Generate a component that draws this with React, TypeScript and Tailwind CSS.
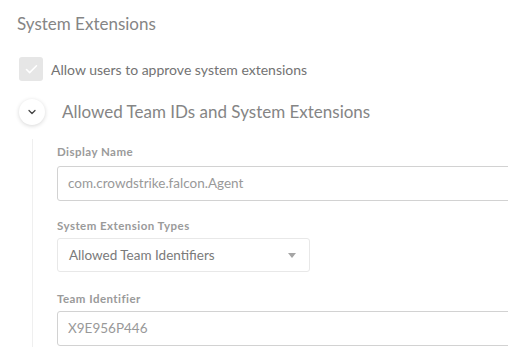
import { ChevronDown, Check } from "lucide-react";

const font = { fontFamily: "Lato, 'Open Sans', sans-serif" };

export default function App() {
  return (
    <div className="w-[508px] h-[364px] overflow-hidden bg-white" style={font}>
      <div className="pl-[17px] pt-[13px]">
        <h1 className="text-[17px] leading-[22px] text-[#858585]">System Extensions</h1>

        {/* Checkbox row */}
        <div className="flex items-center gap-[8px] mt-[22px] ml-[2px]">
          <div className="w-[24px] h-[24px] rounded-[3px] bg-[#e6e6e6] flex items-center justify-center">
            <Check size={15} strokeWidth={2.5} className="text-white" />
          </div>
          <span className="text-[14px] text-[#737373]">Allow users to approve system extensions</span>
        </div>

        {/* Section header */}
        <div className="flex items-center mt-[18px] ml-[2px]">
          <div className="w-[26px] h-[26px] rounded-full bg-white shadow-[0_1px_4px_rgba(0,0,0,0.16)] flex items-center justify-center">
            <ChevronDown size={12} strokeWidth={2.5} className="text-[#444]" />
          </div>
          <span className="ml-[17px] text-[17px] text-[#858585]">
            Allowed Team IDs and System Extensions
          </span>
        </div>

        {/* Nested fields */}
        <div className="mt-[14px] ml-[15px] border-l border-[#efefef] pl-[24px] h-[208px]">
          <div className="pt-[6px]">
            <label className="block text-[11.5px] tracking-[0.04em] font-bold text-[#9a9a9a] leading-[14px]">Display Name</label>
            <div className="mt-[7px] h-[35px] w-[480px] border border-[#d2d2d2] rounded-[3px] flex items-center px-[10px] text-[13.5px] text-[#999]">
              com.crowdstrike.falcon.Agent
            </div>
          </div>

          <div className="mt-[18px]">
            <label className="block text-[11.5px] tracking-[0.04em] font-bold text-[#9a9a9a] leading-[14px]">System Extension Types</label>
            <div className="mt-[5px] h-[34px] w-[253px] border border-[#e8e8e8] rounded-[3px] flex items-center justify-between pl-[11px] pr-[13px] text-[13.5px] text-[#7a7a7a]">
              <span>Allowed Team Identifiers</span>
              <span className="w-0 h-0 border-l-[4px] border-r-[4px] border-t-[5px] border-l-transparent border-r-transparent border-t-[#a5a5a5]" />
            </div>
          </div>

          <div className="mt-[20px]">
            <label className="block text-[11.5px] tracking-[0.04em] font-bold text-[#9a9a9a] leading-[14px]">Team Identifier</label>
            <div className="mt-[5px] h-[35px] w-[480px] border border-[#d2d2d2] rounded-[3px] flex items-center px-[10px] text-[13.5px] text-[#999]">
              X9E956P446
            </div>
          </div>
        </div>
      </div>
    </div>
  );
}
